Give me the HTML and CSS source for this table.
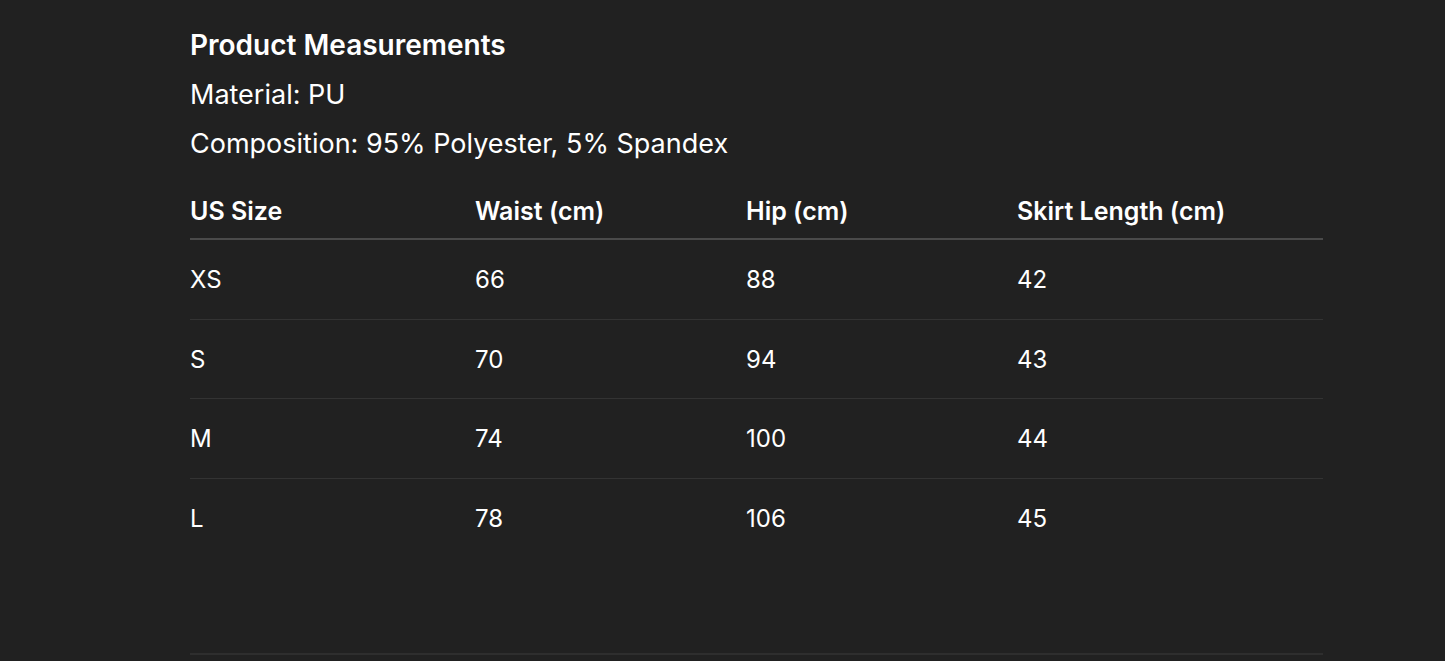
FILE: index.html
```html
<!DOCTYPE html>
<html lang="en">
<head>
<meta charset="utf-8">
<title>Product Measurements</title>
<link rel="stylesheet" href="styles.css">
</head>
<body>
<main class="page">
  <section class="measurements">
    <h2 class="title">Product Measurements</h2>
    <p class="info">Material: PU</p>
    <p class="info">Composition: 95% Polyester, 5% Spandex</p>
    <table class="size-table">
      <thead>
        <tr>
          <th class="c1">US Size</th>
          <th class="c2">Waist (cm)</th>
          <th class="c3">Hip (cm)</th>
          <th class="c4">Skirt Length (cm)</th>
        </tr>
      </thead>
      <tbody>
        <tr><td>XS</td><td>66</td><td>88</td><td>42</td></tr>
        <tr class="short"><td>S</td><td>70</td><td>94</td><td>43</td></tr>
        <tr><td>M</td><td>74</td><td>100</td><td>44</td></tr>
        <tr><td>L</td><td>78</td><td>106</td><td>45</td></tr>
      </tbody>
    </table>
    <hr class="divider">
  </section>
</main>
</body>
</html>
```

FILE: styles.css
```css
html, body {
  margin: 0;
  padding: 0;
  background: #212121;
}
body {
  font-family: Inter, "Noto Sans", "Liberation Sans", sans-serif;
  color: #ffffff;
}
.page {
  padding: 20px 0 0 190px;
}
.measurements {
  width: 1133px;
}
.title {
  margin: 0;
  font-size: 28px;
  font-weight: 600;
  line-height: 50px;
}
.info {
  margin: 0;
  font-size: 27px;
  font-weight: 400;
  line-height: 49px;
}
.size-table {
  width: 100%;
  border-collapse: collapse;
  table-layout: fixed;
}
.size-table th {
  text-align: left;
  font-size: 25px;
  font-weight: 600;
  line-height: 30px;
  padding: 28px 0 12px 0;
  border-bottom: 2px solid #4a4a4a;
}
.c1 { width: 285px; }
.c2 { width: 271px; }
.c3 { width: 271px; }
.c4 { width: auto; }
.size-table td {
  font-size: 24px;
  font-weight: 400;
  line-height: 30px;
  padding: 25px 0 24px 0;
  border-bottom: 1px solid #333333;
}
.size-table tbody tr.short td {
  padding-bottom: 23px;
}
.size-table tbody tr:last-child td {
  border-bottom: none;
}
.divider {
  margin: 95px 0 0 0;
  border: none;
  border-top: 2px solid #2e2e2e;
  height: 0;
}
```
